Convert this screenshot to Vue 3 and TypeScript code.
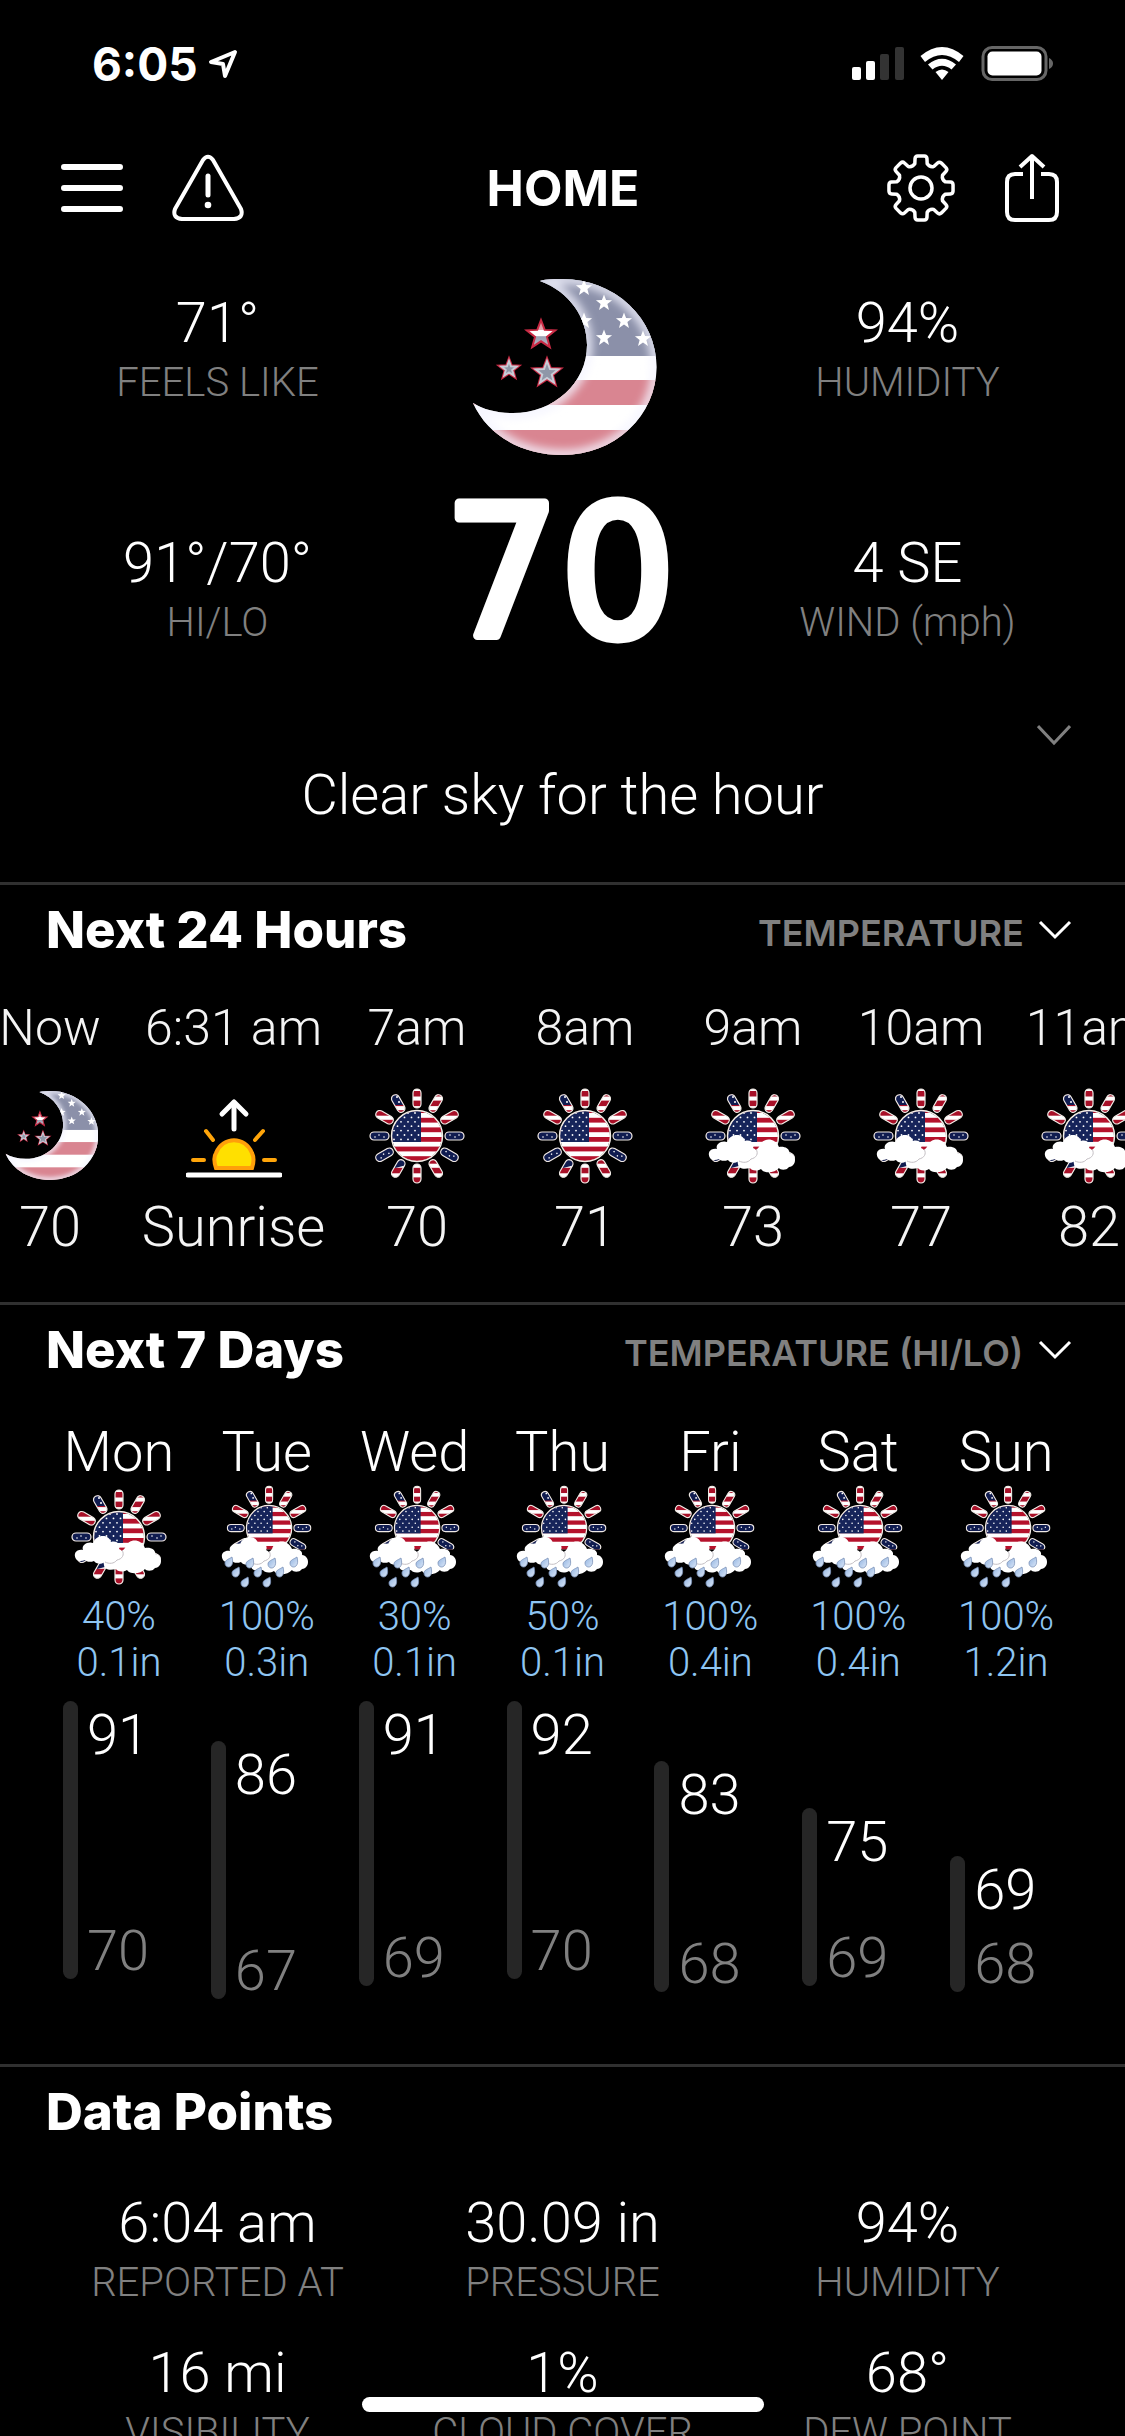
<script setup lang="ts">
interface Stat {
  value: string
  label: string
}

interface Hour {
  time: string
  icon: 'moon' | 'sunrise' | 'sun' | 'cloudy'
  value: string
}

interface Day {
  name: string
  icon: 'cloudy' | 'rain'
  chance: string
  amount: string
  high: number
  low: number
  start: number
  length: number
}

const leftStats: Stat[] = [
  { value: '71°', label: 'FEELS LIKE' },
  { value: '91°/70°', label: 'HI/LO' },
]

const rightStats: Stat[] = [
  { value: '94%', label: 'HUMIDITY' },
  { value: '4 SE', label: 'WIND (mph)' },
]

const hours: Hour[] = [
  { time: 'Now', icon: 'moon', value: '70' },
  { time: '6:31 am', icon: 'sunrise', value: 'Sunrise' },
  { time: '7am', icon: 'sun', value: '70' },
  { time: '8am', icon: 'sun', value: '71' },
  { time: '9am', icon: 'cloudy', value: '73' },
  { time: '10am', icon: 'cloudy', value: '77' },
  { time: '11am', icon: 'cloudy', value: '82' },
]

const days: Day[] = [
  { name: 'Mon', icon: 'cloudy', chance: '40%', amount: '0.1in', high: 91, low: 70, start: 0, length: 278 },
  { name: 'Tue', icon: 'rain', chance: '100%', amount: '0.3in', high: 86, low: 67, start: 40, length: 258 },
  { name: 'Wed', icon: 'rain', chance: '30%', amount: '0.1in', high: 91, low: 69, start: 0, length: 285 },
  { name: 'Thu', icon: 'rain', chance: '50%', amount: '0.1in', high: 92, low: 70, start: 0, length: 278 },
  { name: 'Fri', icon: 'rain', chance: '100%', amount: '0.4in', high: 83, low: 68, start: 60, length: 231 },
  { name: 'Sat', icon: 'rain', chance: '100%', amount: '0.4in', high: 75, low: 69, start: 107, length: 178 },
  { name: 'Sun', icon: 'rain', chance: '100%', amount: '1.2in', high: 69, low: 68, start: 155, length: 136 },
]

const dataPoints: Stat[] = [
  { value: '6:04 am', label: 'REPORTED AT' },
  { value: '30.09 in', label: 'PRESSURE' },
  { value: '94%', label: 'HUMIDITY' },
  { value: '16 mi', label: 'VISIBILITY' },
  { value: '1%', label: 'CLOUD COVER' },
  { value: '68°', label: 'DEW POINT' },
]

const iconBox: Record<string, string> = {
  moon: '-4 0 190 180',
  sunrise: '0 0 96 96',
  sun: '0 0 96 96',
  cloudy: '0 0 96 96',
  rain: '0 0 100 104',
}

// Five-pointed star centred on cx, cy
function star(cx: number, cy: number, r: number): string {
  const pts: string[] = []
  for (let i = 0; i < 10; i++) {
    const a = -Math.PI / 2 + (i * Math.PI) / 5
    const d = i % 2 ? r * 0.42 : r
    pts.push(`${(cx + d * Math.cos(a)).toFixed(2)},${(cy + d * Math.sin(a)).toFixed(2)}`)
  }
  return pts.join(' ')
}

// Eight-toothed cog outline
function cog(): string {
  const polar = (r: number, a: number) =>
    `${(35 + r * Math.sin(a)).toFixed(2)} ${(35 - r * Math.cos(a)).toFixed(2)}`
  let d = ''
  for (let k = 0; k < 8; k++) {
    const a = (k * Math.PI) / 4
    d += `${k ? 'L' : 'M'}${polar(25, a - 0.25)} L${polar(30, a - 0.2)} Q${polar(32.4, a - 0.18)} ${polar(32.2, a - 0.1)}`
    d += ` L${polar(32.2, a + 0.1)} Q${polar(32.4, a + 0.18)} ${polar(30, a + 0.2)} L${polar(25, a + 0.25)}`
    d += ` Q${polar(22.4, a + 0.393)} ${polar(25, a + 0.535)}`
  }
  return d + 'Z'
}

const rays = Array.from({ length: 12 }, (_, i) => i * 30)
const blueRays = [90, 120, 240, 270]
const stripes = Array.from({ length: 11 }, (_, i) => 1 + i * 9.6)

const cantonStars: [number, number][] = []
for (let row = 0; row < 7; row++) {
  for (let col = 0; col < 4; col++) {
    cantonStars.push([25 + col * 7 + (row % 2 ? 3.5 : 0), 25 + row * 4.4])
  }
}

const moonStars: [number, number][] = [[114, 10], [134, 25], [154, 43], [134, 60], [114, 43], [173, 61]]
const looseStars: [number, number, number][] = [[71, 57, 15], [39, 91, 11], [77, 95, 15]]
const drops: [number, number][] = [
  [12, 77], [33, 78], [55, 78], [77, 77], [19, 87], [41, 87], [63, 87], [28, 97], [50, 97],
]
</script>

<template>
  <div class="app">
    <svg class="library" width="0" height="0" aria-hidden="true">
      <defs>
        <clipPath id="disc"><circle cx="48" cy="48" r="25" /></clipPath>
        <clipPath id="rays">
          <rect v-for="a in rays" :key="a" x="44" y="1" width="8" height="19" rx="4" :transform="`rotate(${a} 48 48)`" />
        </clipPath>
        <clipPath id="upper"><rect x="-5" y="-5" width="106" height="77" /></clipPath>
        <clipPath id="crescent">
          <path d="M70 3C76 1 86 1 93 1A93.500 88 0 0 1 186.500 89A93.500 88 0 0 1 93 177C52 177 18 158 3 125C14 132 28 135 43 135C84 135 117 105 117 67C117 40 100 14 70 3Z" />
        </clipPath>
        <filter id="glow"><feGaussianBlur stdDeviation="4" /></filter>
        <linearGradient id="drop" x1="0" y1="0" x2="1" y2="1">
          <stop offset="0" stop-color="#8fb2e0" />
          <stop offset="1" stop-color="#dde8f8" />
        </linearGradient>
        <linearGradient id="starfill" x1="0" y1="0" x2="0" y2="1">
          <stop offset="0" stop-color="#d98b97" />
          <stop offset="0.35" stop-color="#e3a5ae" />
          <stop offset="0.36" stop-color="#fff" />
          <stop offset="0.6" stop-color="#fff" />
          <stop offset="0.61" stop-color="#9aa0b2" />
          <stop offset="1" stop-color="#b9bdca" />
        </linearGradient>

        <g id="moon">
          <g clip-path="url(#crescent)">
            <rect width="190" height="180" fill="#fff" />
            <rect width="190" height="78" fill="#8b90a9" />
            <rect y="102" width="190" height="25" fill="#d98591" />
            <rect y="152" width="190" height="28" fill="#d98591" />
            <path d="M70 3C76 1 86 1 93 1A93.500 88 0 0 1 186.500 89A93.500 88 0 0 1 93 177C52 177 18 158 3 125C14 132 28 135 43 135C84 135 117 105 117 67C117 40 100 14 70 3Z" fill="none" stroke="#f4f4ff" stroke-opacity="0.8" stroke-width="11" filter="url(#glow)" />
            <polygon v-for="(s, i) in moonStars" :key="i" :points="star(s[0], s[1], 8.5)" fill="#fff" />
          </g>
          <polygon v-for="(s, i) in looseStars" :key="i" :points="star(s[0], s[1], s[2])" :fill="i ? '#8f97a8' : 'url(#starfill)'" stroke="#c92a44" stroke-width="2" />
          <polygon v-for="(s, i) in looseStars.slice(1)" :key="'i' + i" :points="star(s[0], s[1], s[2] - 3)" fill="none" stroke="#c9ccd6" stroke-width="2" />
        </g>

        <g id="sun">
          <g clip-path="url(#rays)">
            <rect width="96" height="96" fill="#fff" />
            <rect v-for="y in stripes" :key="y" :y="y + 2" width="96" height="5.500" fill="#a81028" />
            <rect v-for="a in blueRays" :key="a" x="43" y="0" width="10" height="21" fill="#101c50" :transform="`rotate(${a} 48 48)`" />
            <rect x="20" y="2" width="18" height="15" fill="#101c50" />
            <path d="M26 70h12v7l-12 3z" fill="#101c50" />
            <g v-for="a in blueRays" :key="'s' + a" :transform="`rotate(${a} 48 48)`" fill="#fff">
              <circle cx="47" cy="6" r="0.800" />
              <circle cx="49" cy="10" r="0.800" />
              <circle cx="47" cy="15" r="0.800" />
            </g>
            <circle cx="28" cy="9" r="1" fill="#fff" />
            <circle cx="30" cy="14" r="1" fill="#fff" />
          </g>
          <rect v-for="a in rays" :key="'o' + a" x="44" y="1" width="8" height="19" rx="4" fill="none" stroke="#efe9e4" stroke-width="1.200" :transform="`rotate(${a} 48 48)`" />
          <g clip-path="url(#disc)">
            <rect x="20" y="20" width="56" height="56" fill="#fff" />
            <rect v-for="y in stripes" :key="'d' + y" x="20" :y="y" width="56" height="4.800" fill="#b5122c" />
            <rect x="20" y="20" width="32" height="34" fill="#16245a" />
            <circle v-for="(s, i) in cantonStars" v-show="s[0] < 51" :key="'c' + i" :cx="s[0]" :cy="s[1]" r="0.900" fill="#fff" />
          </g>
          <circle cx="48" cy="48" r="25.500" fill="none" stroke="#f5efe8" stroke-width="1.400" />
        </g>

        <g id="clouds">
          <path d="M33 76C31 70 38 68 44 70L54 59C57 49 70 49 74 59C80 58 85 61 84 65C92 66 92 78 84 79C81 83 75 82 74 80C70 85 59 86 56 81C51 84 46 82 45 80C38 82 33 80 33 76Z" fill="#fff" />
          <path d="M5 70C2 65 5 60 12 61C10 56 17 52 22 54C25 46 37 44 40 53C47 51 50 57 48 60C54 62 53 71 46 71C44 76 37 76 34 73C30 76 25 75 23 72C18 74 15 72 14 71C10 73 6 72 5 70Z" fill="#fff" />
          <path d="M51 61C54 66 51 70 46 71C43 75 38 75 34 73" fill="none" stroke="#c4bfc4" stroke-width="1" />
        </g>

        <g id="sunrise">
          <g fill="none" stroke="#fff" stroke-width="4" stroke-linecap="round" stroke-linejoin="round">
            <path d="M48 41V15" stroke-width="5" />
            <path d="M36 26L48 14L60 26" stroke-width="5" />
            <path d="M2 87H94" stroke-width="5" />
          </g>
          <path d="M30 80C28 74 28 68 30 65C37 48 59 48 66 65C68 69 68 74 66 80Z" fill="#ffe000" stroke="#ff9f0a" stroke-width="4" />
          <path d="M20 43L27 52M77 43L69 52M7 72H18M78 72H89" stroke="#ffa50a" stroke-width="4" stroke-linecap="round" />
        </g>

        <g id="cloudy">
          <use href="#sun" />
          <use href="#clouds" />
        </g>

        <g id="rain">
          <g transform="translate(9.500 0.500) scale(0.887)"><use href="#sun" clip-path="url(#upper)" /></g>
          <use href="#clouds" transform="translate(1 5)" />
          <g v-for="(d, i) in drops" :key="i" :transform="`translate(${d[0]} ${d[1]})`">
            <path d="M3 -5C4 -1 4 2 2 4C0 6 -4 5 -4 1C-4 -2 0 -3 3 -5Z" fill="url(#drop)" stroke="#7b92b8" stroke-width="0.800" />
          </g>
        </g>
      </defs>
    </svg>

    <div class="status">
      <div class="clock">
        <span>6:05</span>
        <svg width="30" height="30" viewBox="0 0 30 30" aria-hidden="true">
          <path d="M27 3L3 13L15 15L17 27Z" fill="none" stroke="#fff" stroke-width="4" stroke-linejoin="round" />
        </svg>
      </div>
      <svg width="202" height="36" viewBox="0 0 202 36" aria-hidden="true">
        <rect x="0" y="21" width="9" height="13" rx="2" fill="#fff" />
        <rect x="14" y="15" width="9" height="19" rx="2" fill="#fff" />
        <rect x="28" y="8" width="9" height="26" rx="2" fill="#333" />
        <rect x="43" y="1" width="9" height="33" rx="2" fill="#333" />
        <path d="M68.500 10Q90 -8 111.500 10L107 16Q90 2 73 16Z" fill="#fff" />
        <path d="M76 18.500Q90 7 104 18.500L99.500 23.500Q90 16 80.500 23.500Z" fill="#fff" />
        <path d="M83.500 26Q90 21 96.500 26L90 34Z" fill="#fff" />
        <rect x="131" y="1.500" width="63" height="32" rx="9" fill="none" stroke="#666" stroke-width="3" />
        <rect x="135.500" y="5.500" width="54" height="24" rx="5" fill="#fff" />
        <path d="M197 12Q201 14 201 17.500Q201 21 197 23Z" fill="#666" />
      </svg>
    </div>

    <header class="toolbar">
      <div class="tools">
        <button type="button" aria-label="Menu">
          <svg width="62" height="50" viewBox="0 0 62 50">
            <path d="M3 4H59M3 25H59M3 46H59" stroke="#fff" stroke-width="6" stroke-linecap="round" />
          </svg>
        </button>
        <button type="button" aria-label="Alerts">
          <svg width="72" height="68" viewBox="0 0 72 68">
            <path d="M31 6Q36 -0.500 41 6L69 55Q72 64 62 65H10Q0 64 3 55Z" fill="none" stroke="#fff" stroke-width="4" stroke-linejoin="round" />
            <path d="M36 22V41" stroke="#fff" stroke-width="5" stroke-linecap="round" />
            <circle cx="36" cy="51" r="3.300" fill="#fff" />
          </svg>
        </button>
      </div>
      <h1>HOME</h1>
      <div class="tools end">
        <button type="button" aria-label="Settings">
          <svg width="70" height="70" viewBox="0 0 70 70">
            <path :d="cog()" fill="none" stroke="#fff" stroke-width="3.500" stroke-linejoin="round" />
            <circle cx="35" cy="35" r="11" fill="none" stroke="#fff" stroke-width="3.500" />
          </svg>
        </button>
        <button type="button" aria-label="Share">
          <svg width="60" height="70" viewBox="0 0 60 70">
            <g fill="none" stroke="#fff" stroke-width="4" stroke-linecap="butt" stroke-linejoin="round">
              <path d="M18 21H10Q2 21 2 29V59Q2 67 10 67H44Q52 67 52 59V29Q52 21 44 21H36" />
              <path d="M27 46V3M15 14L27 3L39 14" />
            </g>
          </svg>
        </button>
      </div>
    </header>

    <main>
      <section class="hero">
        <div class="column">
          <div v-for="s in leftStats" :key="s.label" class="stat">
            <div class="value">{{ s.value }}</div>
            <div class="label">{{ s.label }}</div>
          </div>
        </div>
        <div class="current">
          <svg width="190" height="180" viewBox="-2 0 190 180" aria-hidden="true"><use href="#moon" /></svg>
          <svg class="temperature" width="260" height="150" viewBox="0 0 260 150">
            <text x="127" y="140" text-anchor="middle">70</text>
          </svg>
        </div>
        <div class="column">
          <div v-for="s in rightStats" :key="s.label" class="stat">
            <div class="value">{{ s.value }}</div>
            <div class="label">{{ s.label }}</div>
          </div>
        </div>
      </section>

      <section class="summary">
        <button type="button" aria-label="Expand summary">
          <svg width="34" height="22" viewBox="0 0 34 22"><path d="M1 2L17 19L33 2" fill="none" stroke="#808080" stroke-width="3" /></svg>
        </button>
        <p>Clear sky for the hour</p>
      </section>

      <section class="panel">
        <div class="heading">
          <h2>Next 24 Hours</h2>
          <label class="picker">
            <select aria-label="Hourly measure"><option>TEMPERATURE</option></select>
            <svg width="34" height="20" viewBox="0 0 34 20"><path d="M2 2L17 17L32 2" fill="none" stroke="#fff" stroke-width="3" /></svg>
          </label>
        </div>
        <div class="hours">
          <div v-for="h in hours" :key="h.time" class="hour" :class="{ event: h.icon === 'sunrise' }">
            <div class="time">{{ h.time }}</div>
            <svg width="96" height="96" :viewBox="iconBox[h.icon]" aria-hidden="true"><use :href="'#' + h.icon" /></svg>
            <div class="value">{{ h.value }}</div>
          </div>
        </div>
      </section>

      <section class="panel">
        <div class="heading">
          <h2>Next 7 Days</h2>
          <label class="picker">
            <select aria-label="Daily measure"><option>TEMPERATURE (HI/LO)</option></select>
            <svg width="34" height="20" viewBox="0 0 34 20"><path d="M2 2L17 17L32 2" fill="none" stroke="#fff" stroke-width="3" /></svg>
          </label>
        </div>
        <div class="days">
          <div v-for="d in days" :key="d.name" class="day">
            <div class="value">{{ d.name }}</div>
            <div class="icon">
              <svg v-if="d.icon === 'rain'" width="100" height="104" :viewBox="iconBox.rain" aria-hidden="true"><use href="#rain" /></svg>
              <svg v-else width="96" height="96" :viewBox="iconBox.cloudy" aria-hidden="true"><use href="#cloudy" /></svg>
            </div>
            <div class="precip">{{ d.chance }}<br />{{ d.amount }}</div>
            <div class="track">
              <div class="range" :style="{ marginTop: d.start + 'px', height: d.length + 'px' }">
                <div class="bar"></div>
                <div class="ends">
                  <span>{{ d.high }}</span>
                  <span class="low">{{ d.low }}</span>
                </div>
              </div>
            </div>
          </div>
        </div>
      </section>

      <section class="panel">
        <div class="heading"><h2>Data Points</h2></div>
        <div class="points">
          <div v-for="p in dataPoints" :key="p.label" class="stat">
            <div class="value">{{ p.value }}</div>
            <div class="label">{{ p.label }}</div>
          </div>
        </div>
      </section>
    </main>

    <div class="home-bar"></div>
  </div>
</template>

<style>
body {
  margin: 0;
  background: #000;
}
</style>

<style scoped>
.app {
  position: relative;
  display: flex;
  flex-direction: column;
  height: 100vh;
  overflow: hidden;
  background: #000;
  color: #fff;
  font-family: Roboto, "Liberation Sans", sans-serif;
  font-weight: 300;
}
.library {
  position: absolute;
}
svg {
  display: block;
  flex: none;
}
button {
  padding: 0;
  border: 0;
  background: none;
  cursor: pointer;
}
h1,
h2,
p {
  margin: 0;
}
.status {
  flex: none;
  display: flex;
  align-items: center;
  justify-content: space-between;
  height: 128px;
  padding: 0 71px 0 92px;
}
.clock {
  display: flex;
  align-items: center;
  gap: 10px;
  font: 700 46px/54px Inter, sans-serif;
}
.toolbar {
  flex: none;
  display: grid;
  grid-template-columns: 1fr auto 1fr;
  align-items: center;
  height: 120px;
  padding: 0 60px 0 61px;
}
.tools {
  display: flex;
  align-items: center;
  gap: 49px;
}
.tools.end {
  justify-content: flex-end;
}
h1,
h2 {
  font: 700 50px/60px Inter, sans-serif;
}
h2 {
  font-size: 51px;
  font-weight: 800;
}
main {
  flex: 1;
  min-height: 0;
  overflow-y: auto;
  scrollbar-width: none;
}
.hero {
  display: grid;
  grid-template-columns: repeat(3, 1fr);
  padding: 0 45px;
}
.column {
  display: flex;
  flex-direction: column;
  gap: 120px;
  padding-top: 40px;
}
.stat {
  text-align: center;
  white-space: nowrap;
}
.value {
  font-size: 56px;
  line-height: 70px;
}
.label {
  color: #808080;
  font-size: 40px;
  line-height: 50px;
}
.current {
  display: flex;
  flex-direction: column;
  align-items: center;
  gap: 38px;
  padding-top: 30px;
}
.temperature {
  overflow: visible;
}
.temperature text {
  fill: #fff;
  stroke: #fff;
  stroke-width: 9px;
  stroke-linejoin: round;
  font: 400 182px "DejaVu Sans", sans-serif;
}
.summary {
  display: flex;
  flex-direction: column;
  align-items: flex-end;
  gap: 14px;
  padding: 76px 54px 52px;
}
.summary p {
  align-self: stretch;
  text-align: center;
  font-size: 56px;
  line-height: 70px;
}
.panel {
  border-top: 3px solid #303030;
  padding-top: 15px;
}
.heading {
  display: flex;
  align-items: center;
  justify-content: space-between;
  padding: 0 53px 0 46px;
}
.picker {
  display: flex;
  align-items: center;
  gap: 14px;
}
select {
  appearance: none;
  margin: 0;
  padding: 6px 0 0;
  border: 0;
  background: none;
  color: #808080;
  font: 600 36px/42px Inter, sans-serif;
}
.hours {
  display: flex;
  overflow: hidden;
  padding: 38px 0 40px;
}
.hour {
  flex: none;
  display: flex;
  flex-direction: column;
  align-items: center;
  width: 168px;
  color: #f4f4f4;
  white-space: nowrap;
}
.hour:first-child {
  margin-left: -34px;
}
.hour.event {
  width: 199px;
}
.time {
  font-size: 50px;
  line-height: 60px;
}
.hour svg {
  margin: 30px 0 8px;
}
.days {
  display: grid;
  grid-template-columns: repeat(7, 1fr);
  padding: 37px 45px 63px;
}
.day {
  text-align: center;
}
.icon {
  display: flex;
  align-items: center;
  justify-content: center;
  height: 100px;
}
.precip {
  margin: 7px 0 15px;
  color: #8ec5f2;
  font-size: 40px;
  line-height: 46px;
}
.track {
  display: flow-root;
  height: 300px;
}
.range {
  display: flex;
  gap: 9px;
  padding-left: 18px;
}
.bar {
  width: 15px;
  border-radius: 8px;
  background: #262626;
}
.ends {
  display: flex;
  flex-direction: column;
  justify-content: space-between;
  padding-top: 6px;
  font-size: 56px;
  line-height: 56px;
}
.low {
  color: #808080;
}
.points {
  display: grid;
  grid-template-columns: repeat(3, 1fr);
  row-gap: 30px;
  padding: 46px 45px 60px;
}
.home-bar {
  position: absolute;
  bottom: 24px;
  left: 50%;
  width: 402px;
  height: 15px;
  border-radius: 8px;
  background: #fff;
  transform: translateX(-50%);
}
</style>
